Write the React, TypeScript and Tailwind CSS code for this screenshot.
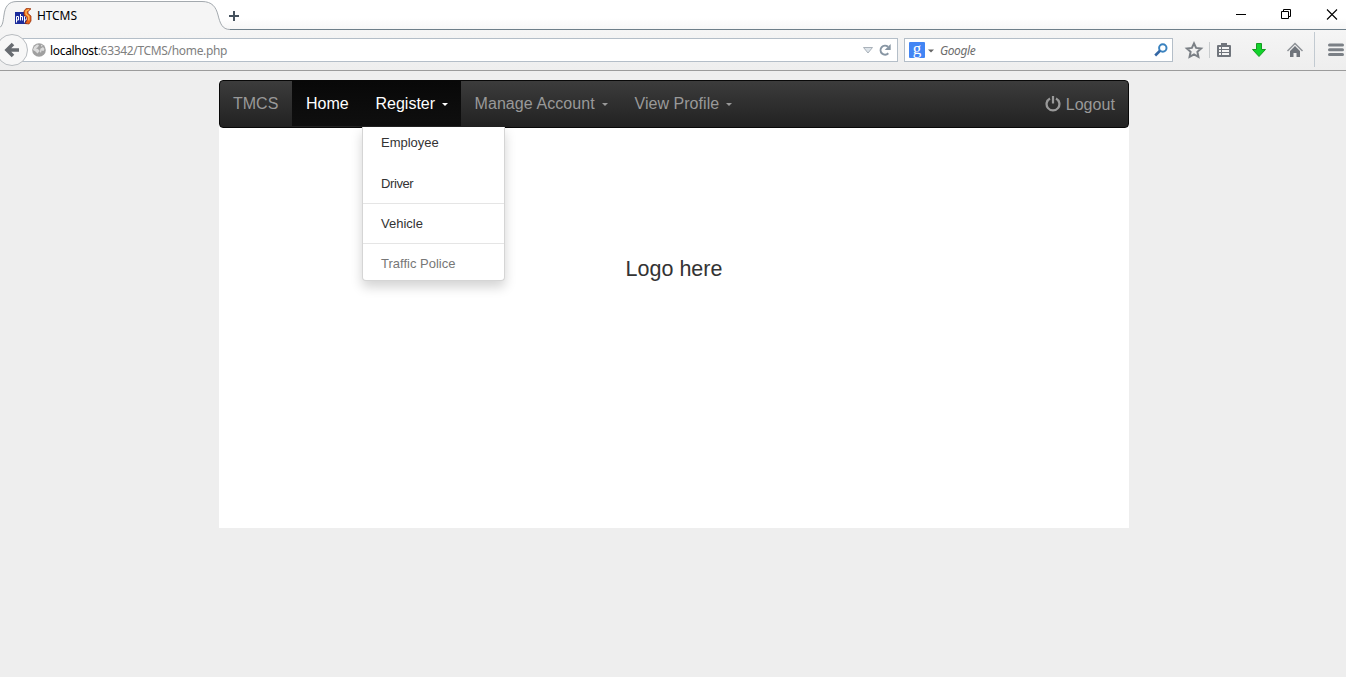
import React from "react";

function PhpIcon() {
  return (
    <svg width="17" height="17" viewBox="0 0 17 17" className="shrink-0">
      <rect x="0" y="4" width="12" height="12" fill="#1c2c9c" />
      <path d="M1.500 14.500V8.500h2v3.500h-2M5.500 6V12.500M5.500 8.500h2v4M9.500 14.500V8.500h2v3.500H9.500" fill="none" stroke="#fff" strokeWidth="1" />
      <path d="M16 .8 11.300.3 9 3v4l3 2.500V12l-2 3.500 4 .500 2-3V8l-3-2.500V3.500z" fill="#e8641b" stroke="#8c2a08" strokeWidth=".7" />
      <path d="M14 1.500 11 3v3l2.800 2.500v4" fill="none" stroke="#ffc35a" strokeWidth="1.200" />
    </svg>
  );
}

function GlobeIcon() {
  return (
    <svg width="14" height="14" viewBox="0 0 14 14" className="shrink-0">
      <circle cx="7" cy="7" r="6.800" fill="#a0a0a0" />
      <path d="M1 7 2 4l3-2.500 2 .5-1 2-2 1.500 2 .5 1.500 2-2 2.500-2-2zM8 6l3-2 1.500 2-1 2-2-.500L9 10l-1.500-2 1-1zM9 1.500l2 1.500-2 .500z" fill="#dcdcdc" />
    </svg>
  );
}

function TabStrip() {
  return (
    <div className="relative h-[30px] bg-gradient-to-b from-white from-60% to-[#f6f6f6]">
      <svg width="1346" height="30" viewBox="0 0 1346 30" className="absolute left-0 top-0">
        <path
          d="M-1 28C3 26 3 21 4 15C5 7 8 1.500 17 1.500H202C212 1.500 216 7 218 15C220 23 222 29.500 230 29.500V31H-1Z"
          fill="#f5f5f5"
        />
        <path
          d="M-1 28C3 26 3 21 4 15C5 7 8 1.500 17 1.500H202C212 1.500 216 7 218 15C220 23 222 29.500 230 29.500"
          fill="none"
          stroke="#a3a9ae"
        />
        <path d="M230 29.500H1346" stroke="#6e7f8a" />
        <path d="M229 16H239M234 11V21" stroke="#46525e" strokeWidth="2" />
        <path d="M1236 14.500H1246" stroke="#000" />
        <path d="M1281.500 11.500H1288.500V18.500H1281.500ZM1283.500 11.500V9.500H1290.500V16.500H1288.500" fill="none" stroke="#000" />
        <path d="M1327 9.500 1337 19.500M1337 9.500 1327 19.500" stroke="#000" strokeWidth="1.100" />
      </svg>
      <div className="relative flex h-[30px] items-center pl-[15px] pt-[2px]">
        <PhpIcon />
        <span className="ml-[5px] text-[12px] tracking-[-0.1px] text-black">HTCMS</span>
      </div>
    </div>
  );
}

function ToolbarIcons() {
  return (
    <svg width="173" height="40" viewBox="1173 30 173 40" className="shrink-0">
      <path d="m1194 43.300 2.100 4.600 5 .5-3.700 3.400 1 5-4.400-2.500-4.400 2.500 1-5-3.700-3.400 5-.5z" fill="none" stroke="#7b8086" strokeWidth="2" />
      <path d="M1209.500 42V58" stroke="#c9ccce" />
      <path d="M1218 45h3v-2h6v2h3q1 0 1 1v10q0 1-1 1h-12q-1 0-1-1V46q0-1 1-1z" fill="#70757c" />
      <path d="M1219 47h2v2h-2zm3 0h7v2h-7zm-3 3h2v2h-2zm3 0h7v2h-7zm-3 3h2v2h-2zm3 0h7v2h-7z" fill="#f4f4f4" />
      <path d="M1256.500 43.500h5v6h4l-6.500 7-6.500-7h4z" fill="#12d32c" stroke="#159b20" />
      <path d="m1287.500 51 7.500-7.500 7.500 7.500" fill="none" stroke="#8e9297" strokeWidth="1.500" />
      <path d="m1290 51 5-5 5 5v6h-3.500v-4h-3v4H1290z" fill="#70757c" />
      <path d="M1314.500 32V67" stroke="#c2cad1" />
      <path d="M1329.500 45H1342.500M1329.500 49.800H1342.500M1329.500 54.500H1342.500" stroke="#7b8086" strokeWidth="3" strokeLinecap="round" />
    </svg>
  );
}

function AddressBar() {
  return (
    <div className="flex h-[41px] items-center border-b border-[#9b9b9b] bg-gradient-to-b from-[#f5f5f5] to-[#eeeeee]">
      <div className="relative flex h-6 w-[898px] shrink-0 items-center">
        <div className="absolute inset-y-0 left-[20px] right-0 border border-[#b4bec8] bg-white" />
        <svg width="30" height="34" viewBox="0 0 30 34" className="absolute left-0 top-[-5px]">
          <circle cx="12" cy="17" r="15.500" fill="#f7f7f7" stroke="#b8bcc0" />
          <path d="M19 17H8M13 11 7 17l6 6" fill="none" stroke="#686c71" strokeWidth="3.600" />
        </svg>
        <div className="relative flex w-full items-center pl-8 pr-[6px]">
          <GlobeIcon />
          <span className="ml-1 mt-[2px] text-[12px] leading-none tracking-[-0.33px] text-[#808080]">
            <span className="text-black">localhost</span>:63342/TCMS/home.php
          </span>
          <svg width="30" height="14" viewBox="0 0 30 14" className="ml-auto">
            <path d="M1.500 4.500h9l-4.500 5.500z" fill="#dce3e9" stroke="#aab2ba" />
            <path d="M26.300 10.300A4.500 4.500 0 1 1 26 3.700" fill="none" stroke="#8795a3" strokeWidth="2" />
            <path d="M28.700 1v6h-6z" fill="#8795a3" />
          </svg>
        </div>
      </div>
      <div className="ml-[6px] flex h-6 w-[269px] shrink-0 items-center border border-[#b4bec8] bg-white px-1">
        <span className="flex h-4 w-4 items-center justify-center rounded-[1px] bg-[#4285f4] pb-[4px] font-['Liberation_Serif',serif] text-[17px] leading-none text-white">g</span>
        <svg width="6" height="4" viewBox="0 0 6 4" className="ml-[3px] mt-px">
          <path d="M0 .500h6L3 3.500z" fill="#666" />
        </svg>
        <span className="ml-[6px] mt-[2px] text-[12px] italic leading-none tracking-[-0.4px] text-[#6d6d6d]">Google</span>
        <svg width="14" height="14" viewBox="0 0 14 14" className="ml-auto">
          <circle cx="8.800" cy="5" r="3.700" fill="none" stroke="#3a82bf" strokeWidth="2" />
          <path d="M6 7.800 1.200 12.500" stroke="#3467a5" strokeWidth="2.600" />
        </svg>
      </div>
      <ToolbarIcons />
    </div>
  );
}

function Caret() {
  return (
    <svg width="6" height="3" viewBox="0 0 6 3" className="ml-[7px]">
      <path d="M0 0H6L3 3Z" fill="currentColor" />
    </svg>
  );
}

function RegisterMenu() {
  return (
    <div className="absolute left-0 top-[46px] h-[154px] w-[143px] rounded-b-[4px] border border-t-0 border-[#d5d5d5] bg-white text-[13px] text-[#333] shadow-[0_6px_12px_rgba(0,0,0,0.175)]">
      <div className="flex h-[36px] items-center px-[18px] pb-[5px]">Employee</div>
      <div className="flex h-[41px] items-center border-b border-[#e5e5e5] px-[18px] pt-[2px] tracking-[-0.4px]">Driver</div>
      <div className="flex h-[40px] items-center border-b border-[#e5e5e5] px-[18px]">Vehicle</div>
      <div className="flex h-[36px] items-center px-[18px] pt-[3px] text-[#777]">Traffic Police</div>
    </div>
  );
}

function Navbar() {
  return (
    <nav className="flex h-12 rounded-[4px] border border-[#080808] bg-gradient-to-b from-[#3c3c3c] to-[#222] text-[16px] text-[#999]">
      <div className="flex w-[72px] items-center pl-[13px]">TMCS</div>
      <div className="flex h-[45px] w-[70px] items-center bg-gradient-to-b from-[#080808] to-[#0f0f0f] pl-[14px] pt-px text-white">Home</div>
      <div className="relative flex h-[45px] w-[99px] items-center bg-gradient-to-b from-[#080808] to-[#0f0f0f] pl-[13.500px] pt-px text-white">
        Register
        <Caret />
        <RegisterMenu />
      </div>
      <div className="flex w-[160px] items-center pl-[13.500px] tracking-[0.08px]">Manage Account<Caret /></div>
      <div className="flex w-[124px] items-center pl-[13.500px] tracking-[0.04px]">View Profile<Caret /></div>
      <div className="ml-auto flex items-center pr-[13px] pt-[2px]">
        <svg width="16" height="16" viewBox="0 0 16 16" className="mr-[5px] mt-[-3px]">
          <path d="M5 2.400A6.400 6.400 0 1 0 11 2.400" fill="none" stroke="currentColor" strokeWidth="2.300" />
          <path d="M8 0V7.500" stroke="currentColor" strokeWidth="2.200" />
        </svg>
        <span className="tracking-[0.06px]">Logout</span>
      </div>
    </nav>
  );
}

export default function App() {
  return (
    <div className="flex h-[677px] w-[1346px] flex-col overflow-hidden bg-[#eee]">
      <header className="font-['Noto_Sans',sans-serif]">
        <TabStrip />
        <AddressBar />
      </header>
      <main className="ml-[219px] mt-[9px] h-[448px] w-[910px] bg-white font-['Liberation_Sans',Arial,sans-serif]">
        <Navbar />
        <h1 className="mt-[129px] text-center text-[21.500px] font-normal leading-6 text-[#333]">Logo here</h1>
      </main>
    </div>
  );
}
